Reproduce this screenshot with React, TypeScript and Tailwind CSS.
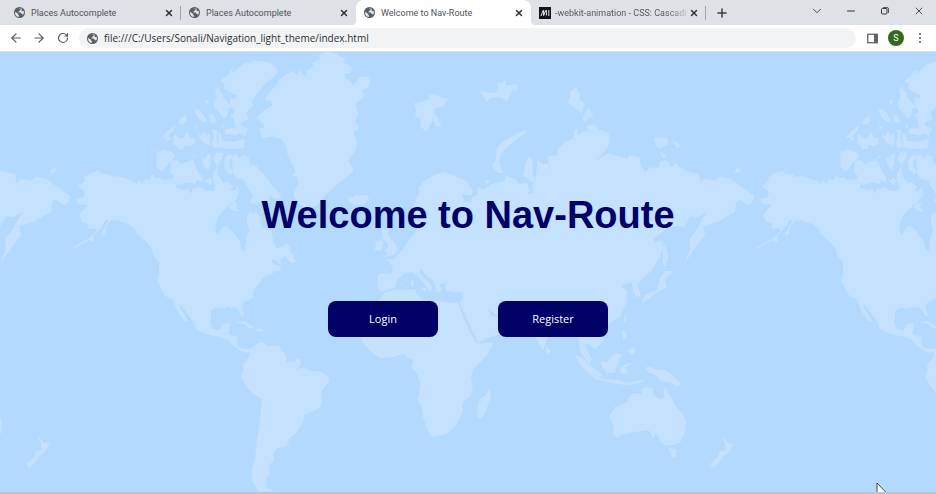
import React from "react";
import { ArrowLeft, ArrowRight, ChevronDown, Minus, Plus, RotateCw, X } from "lucide-react";

type Tab = { title: string; active?: boolean; mdn?: boolean };

const tabs: Tab[] = [
  { title: "Places Autocomplete" },
  { title: "Places Autocomplete" },
  { title: "Welcome to Nav-Route", active: true },
  { title: "-webkit-animation - CSS: Cascadi", mdn: true },
];

function MdnIcon() {
  return (
    <svg viewBox="0 0 12 12" className="h-3 w-3 shrink-0" aria-hidden="true">
      <rect width="12" height="12" fill="#15141a" />
      <path d="M2 9 4.200 3.200M4.600 3.200V8.500L6.900 3.200M7.400 3.200V8.500M9.800 3v6" stroke="#fff" strokeWidth=".9" fill="none" />
    </svg>
  );
}

function GlobeIcon() {
  return (
    <svg viewBox="0 0 16 16" className="h-[11px] w-[11px] shrink-0" aria-hidden="true">
      <circle cx="8" cy="8" r="8" fill="#5a5e63" />
      <path
        d="M1.600 7.200 5.200 9v1.200L7 11.600V14.400A6.500 6.500 0 0 1 1.600 7.200ZM6 1.800 9.500 1.700 10 3.500 8.200 4.600V6L6.600 6.500V8h3.200l1.200 1.800 1.400.4.600 1.600A6.500 6.500 0 0 0 14 5.500L12.400 6.200 10.800 5.200 11.500 2.500Z"
        fill="#e6e8eb"
      />
    </svg>
  );
}

function BrowserTab({ tab }: { tab: Tab }) {
  return (
    <div
      className={
        tab.active
          ? "relative flex h-full w-[175px] min-w-0 items-center rounded-t-lg bg-white pl-2 pr-1"
          : "relative flex h-full w-[175px] min-w-0 items-center pl-2 pr-1"
      }
    >
      {tab.active && (
        <>
          <span className="absolute bottom-0 -left-1 h-1 w-1 bg-[radial-gradient(circle_at_0_0,#dee1e6_4px,#fff_4px)]" />
          <span className="absolute bottom-0 -right-1 h-1 w-1 bg-[radial-gradient(circle_at_100%_0,#dee1e6_4px,#fff_4px)]" />
        </>
      )}
      <button
        type="button"
        className={
          tab.mdn
            ? "flex min-w-0 flex-1 items-center gap-1 text-left"
            : "flex min-w-0 flex-1 items-center gap-1.5 text-left"
        }
      >
        {tab.mdn ? <MdnIcon /> : <GlobeIcon />}
        <span
          className={
            tab.mdn
              ? "whitespace-nowrap bg-gradient-to-r from-[#50545a] from-85% to-[#50545a]/20 bg-clip-text text-transparent"
              : "whitespace-nowrap text-[#50545a]"
          }
        >
          {tab.title}
        </span>
      </button>
      <button type="button" aria-label={"Close " + tab.title} className="flex h-4 w-4 shrink-0 items-center justify-center">
        <X className="h-2.5 w-2.5 text-[#2f3236]" strokeWidth={3.5} />
      </button>
    </div>
  );
}

function Divider() {
  return <span className="-ml-px h-3.5 w-px shrink-0 bg-[#a2a6ab]" />;
}

function TabStrip() {
  return (
    <div className="flex h-[25px] items-center bg-[#dee1e6] pl-1.5 font-['Roboto',sans-serif] text-[9px] leading-3">
      <BrowserTab tab={tabs[0]} />
      <Divider />
      <BrowserTab tab={tabs[1]} />
      <BrowserTab tab={tabs[2]} />
      <BrowserTab tab={tabs[3]} />
      <Divider />
      <button type="button" aria-label="New tab" className="ml-2 flex h-4 w-4 items-center justify-center">
        <Plus className="h-3.5 w-3.5 text-[#3c4043]" strokeWidth={2.6} />
      </button>
      <div className="ml-auto flex items-center self-start text-[#33363a]">
        <button type="button" aria-label="Search tabs" className="flex h-[22px] w-[34px] items-center justify-center">
          <ChevronDown className="h-3.5 w-3.5" strokeWidth={1.5} />
        </button>
        <button type="button" aria-label="Minimize" className="flex h-[22px] w-[34px] items-center justify-center">
          <Minus className="h-3 w-3" strokeWidth={2} />
        </button>
        <button type="button" aria-label="Restore" className="flex h-[22px] w-[34px] items-center justify-center">
          <svg viewBox="0 0 8 8" className="h-2 w-2" fill="none" stroke="currentColor" aria-hidden="true">
            <rect x="0.5" y="1.5" width="5.5" height="5.5" rx="1" />
            <path d="M2 .5h4A1.500 1.500 0 0 1 7.500 2v4" strokeWidth=".8" />
          </svg>
        </button>
        <button type="button" aria-label="Close window" className="flex h-[22px] w-[34px] items-center justify-center">
          <X className="h-3 w-3" strokeWidth={1.7} />
        </button>
      </div>
    </div>
  );
}

function Toolbar() {
  return (
    <div className="flex h-[27px] items-center border-b border-[#dcdfe3] bg-white pl-2 pr-2 text-[#55595e]">
      <button type="button" aria-label="Back" className="flex h-4 w-4 items-center justify-center">
        <ArrowLeft className="h-3.5 w-3.5" strokeWidth={2} />
      </button>
      <button type="button" aria-label="Forward" className="ml-[7px] flex h-4 w-4 items-center justify-center">
        <ArrowRight className="h-3.5 w-3.5" strokeWidth={2} />
      </button>
      <button type="button" aria-label="Reload" className="ml-2 flex h-4 w-4 items-center justify-center">
        <RotateCw className="h-3 w-3" strokeWidth={2.4} />
      </button>
      <div className="ml-2 flex h-5 min-w-0 flex-1 items-center gap-1.5 rounded-full bg-[#f1f3f4] px-2">
        <GlobeIcon />
        <input
          aria-label="Address"
          className="min-w-0 flex-1 bg-transparent font-['Open_Sans','Noto_Sans',sans-serif] text-[10px] leading-4 text-[#2c2f33] outline-none"
          defaultValue="file:///C:/Users/Sonali/Navigation_light_theme/index.html"
        />
      </div>
      <button type="button" aria-label="Side panel" className="ml-2 flex h-4 w-4 items-center justify-center">
        <svg viewBox="0 0 11 11" className="h-[11px] w-[11px]" aria-hidden="true">
          <rect x=".75" y="1.250" width="9.500" height="8.500" fill="none" stroke="#5f6368" strokeWidth="1.300" />
          <path d="M7 1h3.500v9H7z" fill="#5f6368" />
        </svg>
      </button>
      <button
        type="button"
        aria-label="Profile"
        className="ml-2 flex h-4 w-4 items-center justify-center rounded-full bg-[#33691e] font-['Roboto',sans-serif] text-[9px] leading-4 text-white"
      >
        S
      </button>
      <button type="button" aria-label="Menu" className="ml-2 flex h-4 w-4 items-center justify-center">
        <svg viewBox="0 0 4 12" className="h-3 w-1" fill="#55595e" aria-hidden="true">
          <circle cx="2" cy="2" r="1" />
          <circle cx="2" cy="6" r="1" />
          <circle cx="2" cy="10" r="1" />
        </svg>
      </button>
    </div>
  );
}

function WorldMap() {
  return (
    <svg
      viewBox="0 6 2808 1326"
      preserveAspectRatio="xMidYMid slice"
      className="absolute inset-0 h-full w-full"
      fill="#c4e1ff"
      strokeLinejoin="round"
      aria-hidden="true"
    >
      <defs>
        <g id="world">
          {/* North America */}
          <path d="M232 408 245 405 256 392 250 386 275 370 296 365 306 374 325 376 335 384 350 381 375 388 395 394 405 400 412 406 418 392 425 405 436 390 448 393 458 376 465 388 480 384 488 392 510 391 530 404 528 416 550 422 565 420 573 434 580 420 600 414 620 425 640 425 646 412 638 390 640 372 652 352 640 330 648 310 670 312 665 330 655 345 652 370 662 392 672 403 685 400 700 415 690 425 705 425 714 410 716 440 706 455 691 465 668 488 652 508 646 530 650 558 658 552 668 534 681 532 696 545 706 560 721 578 724 600 734 608 738 570 748 545 740 520 744 495 752 488 760 494 770 490 785 510 783 520 787 535 815 545 820 580 830 598 850 592 858 583 868 592 872 610 880 618 888 638 875 645 855 622 838 632 845 650 820 630 815 640 845 655 835 668 825 666 815 676 800 680 785 692 780 701 762 722 758 748 750 751 730 761 725 774 732 801 725 800 712 781 700 774 690 776 685 771 678 778 645 778 633 786 632 826 640 841 660 844 668 826 690 821 688 841 685 856 712 864 712 886 722 898 750 900 756 908 735 911 720 904 700 891 685 874 655 861 640 861 600 848 585 838 583 821 565 800 552 780 538 763 541 778 565 814 560 820 550 812 530 782 520 756 514 748 500 744 492 734 480 711 472 695 478 666 478 640 470 632 460 620 455 600 435 575 410 555 405 540 385 525 365 520 348 512 345 518 335 513 320 530 315 555 303 560 308 545 325 515 318 512 300 540 280 560 282 578 265 574 240 588 217 600 219 595 245 580 268 568 290 545 285 538 263 540 265 525 245 518 238 495 252 480 264 468 235 465 228 452 250 445 255 430 235 412Z" />
          {/* Arctic archipelago */}
          <path d="M470 305 478 308 490 300 498 305 515 308 527 320 505 345 485 368 470 355 468 330ZM515 335 530 332 545 345 570 335 575 328 582 340 590 360 608 390 604 400 590 392 588 405 560 400 540 408 515 395 522 382 510 370 512 350ZM484 268 500 248 525 228 520 245 505 262 512 272 495 277 500 265ZM520 262 525 255 540 270 552 265 562 248 570 265 583 268 585 283 570 292 555 288 550 300 535 302 530 292 520 285ZM535 222 542 208 557 197 560 215 548 228ZM583 180 600 182 605 190 620 212 612 222 592 205ZM583 222 594 236 590 242ZM616 155 624 153 626 162 620 166ZM628 196 638 196 645 210 650 222 632 220ZM593 250 605 262 613 245 620 262 630 250 630 290 618 285 605 280ZM635 242 652 242 650 262 655 295 642 298 636 285 642 262ZM640 165 650 145 645 125 655 110 660 128 668 132 670 145 695 175 685 180 682 200 670 210 662 195 646 180ZM661 95 680 80 695 62 702 72 715 56 730 45 760 36 800 38 818 46 833 65 825 80 795 105 775 130 755 155 760 170 740 190 745 210 725 220 718 232 705 230 700 205 690 200 705 190 690 165 692 145 705 150 710 140 690 130 670 118 675 105ZM665 224 672 234 666 240ZM675 240 700 236 720 228 745 240 735 262 720 252 705 260 690 255 675 256ZM655 250 665 258 668 275 700 278 735 270 730 298 690 300 655 295ZM672 335 682 320 700 316 690 335 688 352 700 370 690 375 675 360ZM695 325 710 315 720 330 728 318 745 323 750 345 768 350 790 375 805 390 812 405 835 430 845 448 825 450 805 438 810 460 800 472 785 460 765 465 748 460 760 440 740 410 730 392 712 390 700 375ZM686 475 700 460 712 462 708 475 720 488 702 486 692 480ZM605 325 613 330 622 316 632 312 630 350 622 364 610 345ZM578 320 588 322 585 328ZM615 395 630 385 638 398 628 408ZM745 415 758 412 756 426 748 424Z" />
          {/* Greenland, Iceland, Svalbard */}
          <path d="M770 205 785 190 800 178 818 170 812 155 795 150 805 135 830 105 835 92 862 75 880 65 895 80 895 60 905 72 920 85 918 68 940 52 935 42 960 28 955 18 980 8 1010 15 1035 30 1028 40 1060 55 1050 72 1035 75 1035 88 1055 100 1058 110 1080 85 1100 82 1112 95 1108 112 1085 125 1093 140 1080 155 1065 165 1075 195 1065 215 1078 240 1060 250 1070 275 1068 300 1055 320 1045 335 1062 365 1040 385 1000 415 975 440 950 470 915 480 900 465 882 445 882 425 895 405 892 385 875 380 885 370 880 350 865 325 855 285 845 272 820 262 785 268 778 240 795 233ZM1045 440 1058 448 1065 437 1080 440 1100 437 1108 452 1090 468 1065 470 1048 458ZM1242 162 1265 160 1288 150 1285 140 1300 135 1315 142 1345 150 1330 172 1305 178 1300 190 1315 205 1324 232 1310 235 1298 215 1278 250 1262 232 1262 208 1245 205 1248 185Z" />
          {/* Britain and Ireland */}
          <path d="M1145 530 1150 540 1170 542 1163 553 1174 570 1190 590 1192 605 1180 618 1150 625 1165 612 1152 605 1165 592 1160 578 1148 570ZM1127 580 1140 570 1150 580 1145 602 1125 606Z" />
          {/* Europe and Asia */}
          <path d="M1160 630 1180 632 1190 620 1210 600 1230 565 1245 550 1252 540 1270 535 1252 530 1240 518 1236 490 1240 470 1258 430 1255 420 1270 400 1290 385 1310 375 1330 368 1345 373 1360 378 1375 386 1400 395 1418 425 1415 440 1385 435 1395 460 1410 460 1418 445 1432 438 1432 412 1450 422 1475 405 1515 395 1515 378 1545 390 1560 405 1580 400 1590 425 1580 435 1598 434 1598 400 1570 380 1575 350 1588 320 1597 335 1598 370 1605 400 1610 360 1612 330 1625 345 1645 345 1655 370 1650 350 1642 322 1675 318 1672 300 1695 280 1720 268 1722 245 1730 240 1735 258 1755 245 1765 250 1758 232 1785 225 1795 240 1825 252 1832 275 1820 300 1790 332 1825 312 1850 320 1885 330 1885 318 1920 325 1922 350 1938 370 1948 355 1975 358 1982 335 2000 335 2015 355 2025 343 2055 365 2080 372 2097 376 2102 404 2112 390 2147 395 2157 384 2192 390 2225 414 2264 442 2255 462 2242 468 2217 450 2208 462 2205 490 2182 502 2150 520 2110 532 2115 558 2090 590 2075 612 2052 645 2070 600 2068 570 2090 540 2120 488 2092 505 2070 502 2052 533 2030 530 2000 540 1960 568 1965 578 1985 575 1990 600 1970 640 1950 670 1925 690 1912 710 1922 740 1910 745 1900 715 1895 700 1880 705 1860 712 1882 722 1880 760 1860 805 1825 824 1800 836 1790 850 1808 862 1812 876 1785 901 1770 888 1758 880 1758 900 1776 930 1770 945 1755 930 1740 905 1735 865 1715 830 1690 820 1655 845 1642 870 1628 906 1610 870 1595 830 1560 815 1530 808 1490 800 1460 773 1475 800 1505 808 1495 856 1460 868 1435 880 1430 870 1415 842 1396 800 1380 763 1388 745 1390 730 1370 730 1338 725 1335 700 1320 707 1325 725 1315 730 1308 725 1300 695 1275 675 1262 660 1258 668 1270 685 1298 710 1290 730 1285 720 1262 692 1240 670 1215 672 1190 695 1185 715 1155 725 1145 728 1132 715 1132 680 1142 673 1175 676 1178 655Z" />
          <path d="M1200 706 1206 700 1205 708ZM1234 695 1241 692 1240 712 1233 710ZM1260 716 1280 718 1277 728Z" />
          {/* Africa and Madagascar */}
          <path d="M1155 730 1185 723 1245 720 1252 740 1270 752 1310 755 1350 761 1375 761 1380 780 1395 815 1410 850 1428 880 1445 884 1478 880 1475 895 1458 922 1420 960 1413 985 1418 1020 1412 1040 1390 1060 1387 1090 1370 1125 1350 1148 1330 1158 1295 1164 1285 1146 1270 1110 1265 1076 1252 1051 1262 1012 1252 975 1235 956 1240 931 1228 930 1210 915 1180 924 1140 928 1110 906 1085 876 1085 850 1090 815 1120 775 1140 750ZM1470 1016 1472 1041 1458 1086 1445 1108 1432 1106 1432 1076 1440 1050 1455 1040Z" />
          {/* South America and the Caribbean */}
          <path d="M750 901 762 890 780 880 795 883 802 890 840 891 842 902 855 916 860 938 873 936 882 942 890 930 900 928 902 945 890 962 910 955 930 965 962 968 985 982 988 996 965 1026 965 1061 955 1081 935 1088 912 1098 910 1118 890 1151 865 1171 866 1185 855 1194 835 1196 818 1216 822 1232 805 1252 810 1270 798 1290 800 1316 825 1328 777 1328 758 1300 755 1270 765 1226 770 1176 778 1130 786 1050 760 1036 740 1013 723 981 730 970 730 946 748 925ZM705 821 730 816 742 822 765 838 745 837 735 826ZM762 843 778 836 795 844 780 848Z" />
          {/* Indian Ocean and Pacific islands */}
          <path d="M1639 894 1652 906 1645 919 1638 910ZM1725 917 1745 925 1780 956 1808 978 1798 984 1820 991 1850 992 1880 1001 1935 991 1920 1001 1880 1009 1830 1001 1785 991 1755 961 1738 945ZM1800 935 1820 941 1832 925 1848 912 1865 916 1855 935 1845 971 1820 971 1808 955ZM1862 960 1872 946 1898 941 1882 953 1875 956 1885 973 1870 976 1860 970ZM1865 846 1880 848 1878 868 1870 874ZM1883 903 1905 893 1905 914 1892 916ZM1869 818 1876 800 1881 802 1875 821ZM1935 955 1955 955 1965 960 2000 964 2020 981 2045 1006 2030 1011 2010 1001 1985 999 1970 981 1945 970ZM1827 1101 1845 1074 1880 1061 1890 1040 1900 1031 1925 1036 1925 1020 1940 1014 1958 1016 1960 1036 1978 1050 1990 1050 1994 1011 2005 1031 2015 1046 2025 1071 2045 1091 2058 1116 2055 1151 2040 1181 2020 1188 1995 1190 1980 1176 1970 1154 1960 1168 1945 1144 1910 1148 1870 1156 1850 1166 1840 1156 1842 1136ZM2005 1196 2030 1201 2028 1221 2018 1228ZM1925 756 1935 738 1970 724 1978 690 1995 666 2020 666 1995 691 2000 716 1970 731 1950 746 1930 763ZM1990 580 2000 600 2005 625 1995 655 1988 640ZM1895 701 1910 706 1920 731 1910 746 1900 731ZM112 1158 130 1181 150 1184 130 1214 118 1221 105 1241 88 1258 78 1244 100 1226 108 1206 125 1204 122 1181Z" />
          {/* Siberian Arctic islands */}
          <path d="M1475 350 1488 330 1490 300 1510 275 1575 243 1578 250 1545 275 1515 300 1500 320 1498 345 1510 372 1495 372ZM1438 125 1465 130 1485 132 1495 115 1492 103 1508 100 1515 92 1520 110 1545 105 1535 130 1520 158 1505 145 1475 145 1460 158ZM1542 112 1550 105 1555 120 1545 126ZM1710 130 1728 115 1740 135 1738 150 1755 165 1745 192 1725 178 1702 158 1710 148ZM1748 210 1765 175 1780 200 1755 218ZM1963 268 2000 265 2005 285 1980 300 1967 290ZM2017 272 2045 292 2030 297ZM1980 305 2000 322 1988 328ZM147 370 160 356 173 362 160 372ZM1455 395 1465 392 1468 400 1458 404Z" />
        </g>
      </defs>
      <use href="#world" x="-2052" />
      <use href="#world" />
      <use href="#world" x="2052" />
    </svg>
  );
}

const actionClass =
  "h-9 w-[110px] rounded-lg bg-[#000066] font-['Open_Sans','Noto_Sans',sans-serif] text-[11px] leading-4 text-white";

export default function App() {
  return (
    <div className="flex min-h-screen flex-col font-['Noto_Sans','Open_Sans',sans-serif]">
      <header>
        <TabStrip />
        <Toolbar />
      </header>
      <main className="relative flex flex-1 flex-col items-center justify-center overflow-hidden border-b-2 border-[#b9c6d6] bg-[#b3d9ff] pb-3.5">
        <WorldMap />
        <h1 className="relative text-center font-['Liberation_Sans',Arial,sans-serif] text-[38px] font-bold leading-[44px] text-[#000066]">
          Welcome to Nav-Route
        </h1>
        <div className="relative mt-16 flex gap-[60px]">
          <button type="button" className={actionClass}>
            Login
          </button>
          <button type="button" className={actionClass}>
            Register
          </button>
        </div>
        <svg
          viewBox="0 0 12 18"
          className="absolute -bottom-2 right-12 h-[18px] w-3"
          fill="#fff"
          stroke="#222"
          strokeWidth=".8"
          aria-hidden="true"
        >
          <path d="M1 1v14l3.500-3 2 5 2-1-2-4.500H11z" />
        </svg>
      </main>
    </div>
  );
}
